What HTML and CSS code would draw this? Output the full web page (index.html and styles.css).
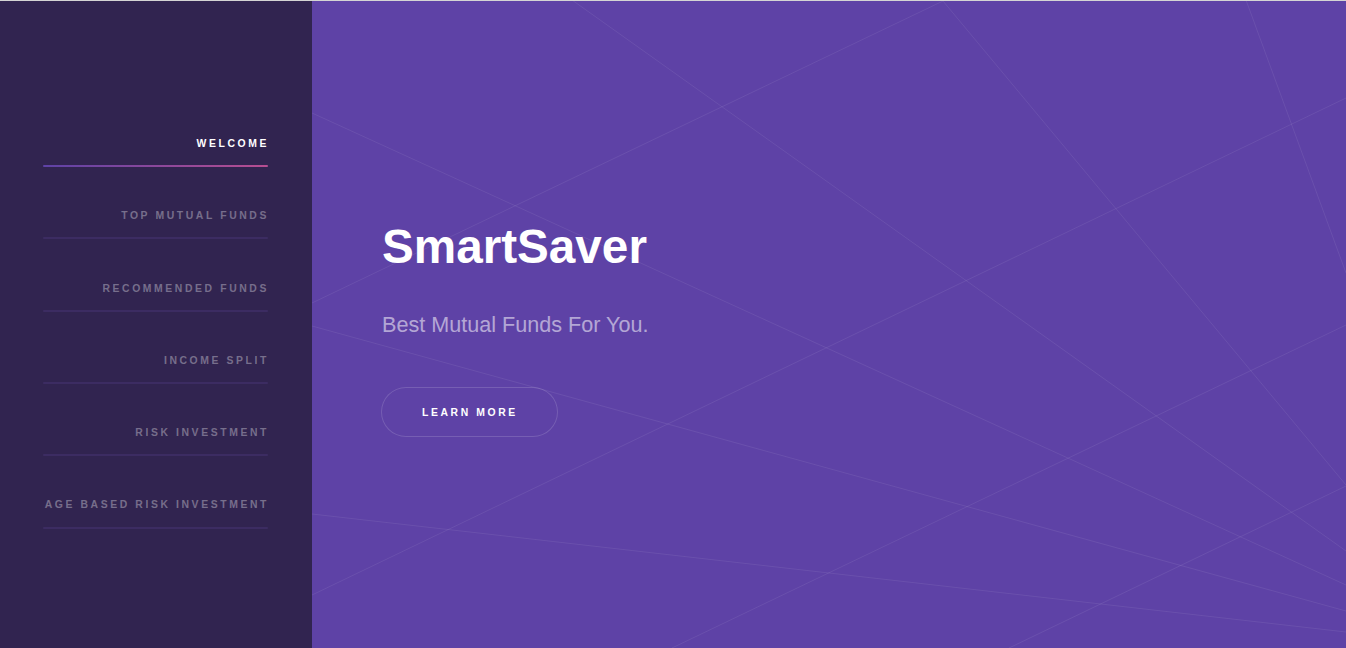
FILE: index.html
```html
<!DOCTYPE html>
<html lang="en">
<head>
<meta charset="utf-8">
<title>SmartSaver</title>
<link rel="stylesheet" href="styles.css">
</head>
<body>
  <aside class="sidebar">
    <nav class="nav">
      <ul class="nav-list">
        <li class="nav-item"><a class="nav-link active" href="#welcome">Welcome</a></li>
        <li class="nav-item"><a class="nav-link" href="#top">Top Mutual Funds</a></li>
        <li class="nav-item"><a class="nav-link" href="#recommended">Recommended Funds</a></li>
        <li class="nav-item"><a class="nav-link" href="#income">Income Split</a></li>
        <li class="nav-item"><a class="nav-link" href="#risk">Risk Investment</a></li>
        <li class="nav-item"><a class="nav-link" href="#age">Age Based Risk Investment</a></li>
      </ul>
    </nav>
  </aside>
  <main class="intro" id="welcome">
    <svg class="intro-bg" viewBox="312 1 1034 647" preserveAspectRatio="none" aria-hidden="true">
      <g fill="none" stroke="rgba(255,255,255,0.075)" stroke-width="1">
        <line x1="572" y1="0" x2="1346" y2="551"/>
        <line x1="312" y1="113" x2="1346" y2="585"/>
        <polyline points="312,303 943,1 1346,485"/>
        <line x1="312" y1="595" x2="1346" y2="98"/>
        <line x1="1246" y1="0" x2="1346" y2="273"/>
        <line x1="312" y1="326" x2="1346" y2="611"/>
        <line x1="312" y1="514" x2="1346" y2="632"/>
        <line x1="672" y1="648" x2="1346" y2="325"/>
        <line x1="1009" y1="648" x2="1346" y2="486"/>
      </g>
    </svg>
    <div class="intro-inner">
      <h1 class="intro-title">SmartSaver</h1>
      <p class="intro-sub">Best Mutual Funds For You.</p>
      <a class="button" href="#top">Learn More</a>
    </div>
  </main>
</body>
</html>
```
FILE: styles.css
```css
* { box-sizing: border-box; }

html, body {
  margin: 0;
  padding: 0;
  height: 100%;
}

body {
  display: flex;
  height: 100vh;
  border-top: 1px solid #d4d4d4;
  font-family: "Liberation Sans", Arial, sans-serif;
  background: #5e42a6;
  overflow: hidden;
}

.sidebar {
  width: 312px;
  flex: 0 0 312px;
  background: #312450;
  padding: 0 44px 0 43px;
  display: flex;
  flex-direction: column;
  justify-content: center;
}

.nav-list {
  list-style: none;
  margin: 0;
  padding: 0;
}

.nav-item {
  margin-top: 25.5px;
}

.nav-item:first-child {
  margin-top: 0;
}

.nav-link {
  display: block;
  position: relative;
  text-align: right;
  text-decoration: none;
  text-transform: uppercase;
  font-size: 10.4px;
  font-weight: bold;
  letter-spacing: 2.6px;
  line-height: 1;
  padding: 18.6px 0 17.8px;
  margin-right: -1px;
  color: rgba(255, 255, 255, 0.35);
}

.nav-link::before {
  content: "";
  position: absolute;
  left: 0;
  right: 1px;
  bottom: 0;
  height: 2px;
  border-radius: 2px;
  background: #3c2c62;
}

.nav-link.active {
  color: #ffffff;
}

.nav-link.active::before {
  background: linear-gradient(to right, #5e42a6, #b74e91);
}

.intro {
  flex: 1;
  position: relative;
  overflow: hidden;
  background: #5e42a6;
}

.intro-bg {
  position: absolute;
  left: 0;
  top: 0;
  width: 100%;
  height: 100%;
}

.intro-inner {
  position: relative;
  padding: 217px 0 0 70px;
}

.intro-title {
  margin: 0 0 32px;
  font-size: 47.66px;
  line-height: 1.2;
  font-weight: bold;
  color: #ffffff;
}

.intro-sub {
  margin: 0 0 43.6px;
  font-size: 21.6px;
  line-height: 35.75px;
  color: rgba(255, 255, 255, 0.55);
}

.button {
  display: inline-block;
  height: 50px;
  line-height: 51px;
  padding: 0 40px 0 41px;
  margin-left: -1px;
  border-radius: 25px;
  box-shadow: inset 0 0 0 1px rgba(255, 255, 255, 0.15);
  color: #ffffff;
  text-decoration: none;
  text-transform: uppercase;
  font-size: 10.4px;
  font-weight: bold;
  letter-spacing: 2.6px;
}
```
